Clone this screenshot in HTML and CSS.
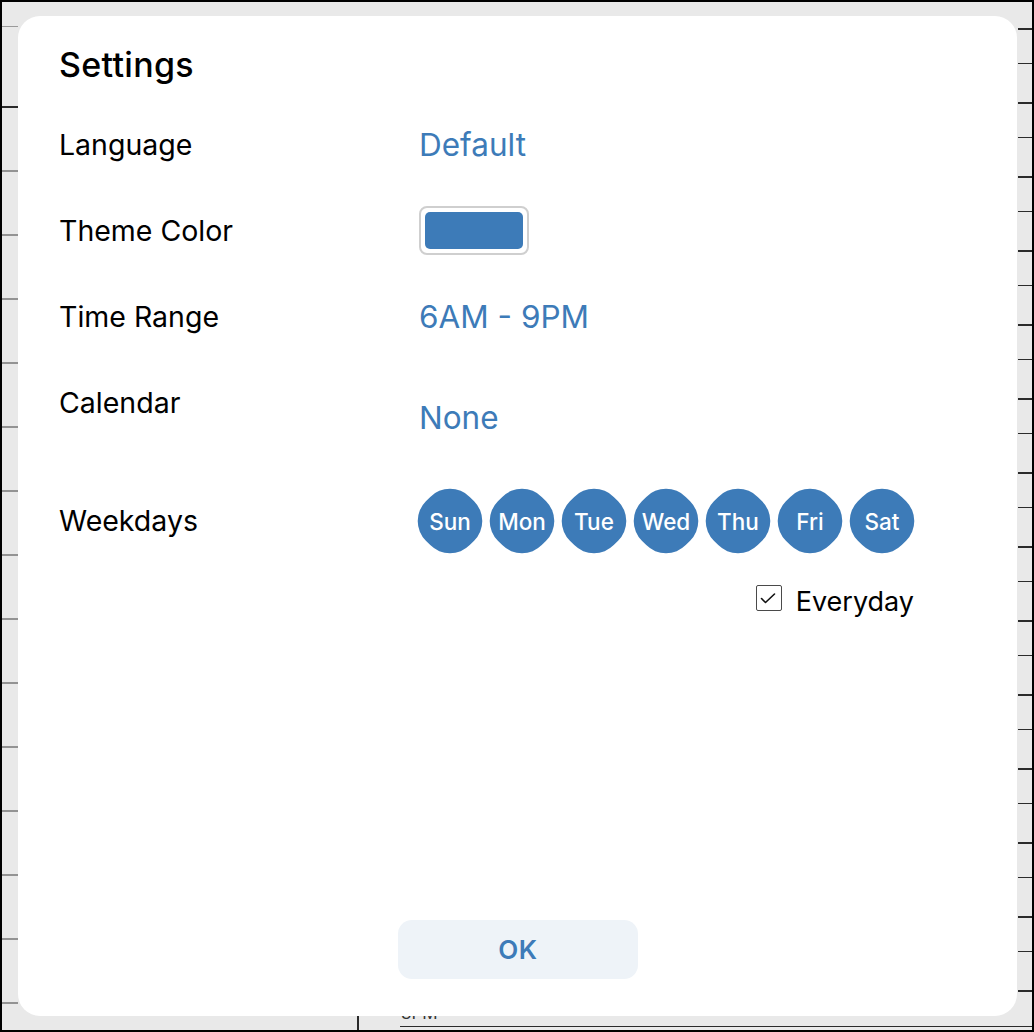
FILE: index.html
```html
<!DOCTYPE html>
<html lang="en">
<head>
<meta charset="utf-8">
<title>Settings</title>
<link rel="stylesheet" href="styles.css">
</head>
<body>
<div class="frame">
  <div class="backdrop">
    <div class="strip-left"></div>
    <div class="strip-top"></div>
    <div class="strip-right"></div>
    <div class="strip-bottom">
      <div class="divider"></div>
      <div class="hour-label">3PM</div>
    </div>
  </div>

  <div class="dialog" role="dialog" aria-label="Settings">
    <h1 class="title">Settings</h1>
    <div class="settings">
      <div class="row">
        <div class="label">Language</div>
        <div class="value">Default</div>
      </div>
      <div class="row">
        <div class="label">Theme Color</div>
        <div class="value"><span class="swatch"><span class="swatch-fill"></span></span></div>
      </div>
      <div class="row">
        <div class="label">Time Range</div>
        <div class="value">6AM - 9PM</div>
      </div>
      <div class="row row-calendar">
        <div class="label">Calendar</div>
        <div class="value value-calendar">None</div>
      </div>
      <div class="row">
        <div class="label">Weekdays</div>
        <div class="days">
          <span class="day"><span>Sun</span></span>
          <span class="day"><span>Mon</span></span>
          <span class="day"><span>Tue</span></span>
          <span class="day"><span>Wed</span></span>
          <span class="day"><span>Thu</span></span>
          <span class="day"><span>Fri</span></span>
          <span class="day"><span>Sat</span></span>
        </div>
      </div>
      <div class="everyday">
        <span class="checkbox">
          <svg width="26" height="26" viewBox="0 0 26 26"><path d="M6.5 13.5 L10.5 17.5 L19.5 9" fill="none" stroke="#111" stroke-width="1.6" stroke-linecap="round" stroke-linejoin="round"/></svg>
        </span>
        <span class="everyday-text">Everyday</span>
      </div>
    </div>
    <div class="spacer"></div>
    <button class="ok">OK</button>
  </div>
</div>
</body>
</html>
```

FILE: styles.css
```css
* { box-sizing: border-box; }

html, body {
  margin: 0;
  padding: 0;
  width: 1034px;
  height: 1032px;
  overflow: hidden;
  font-family: "Inter", "Noto Sans", "Liberation Sans", sans-serif;
}

.frame {
  position: relative;
  width: 1034px;
  height: 1032px;
  border: 2px solid #000;
  background: #e9e9e9;
}

.backdrop {
  display: grid;
  grid-template-columns: 16px 1fr 14px;
  grid-template-rows: 14px 1fr 14px;
  width: 100%;
  height: 100%;
}

.strip-left {
  grid-column: 1;
  grid-row: 1 / -1;
  background:
    linear-gradient(#9a9a9a, #9a9a9a) 0 24px / 100% 1px no-repeat,
    linear-gradient(#2a2a2a, #2a2a2a) 0 104px / 100% 2px no-repeat,
    repeating-linear-gradient(to bottom, #939393 0 2px, transparent 2px 64px) 0 168px / 100% 870px no-repeat;
}

.strip-top { grid-column: 2; grid-row: 1; }

.strip-right {
  grid-column: 3;
  grid-row: 1 / -1;
  background:
    repeating-linear-gradient(to bottom, #2b2b2b 0 2px, transparent 2px 35px, #2b2b2b 35px 36px, transparent 36px 74px) 0 26px / 100% 990px no-repeat,
    linear-gradient(#2b2b2b, #2b2b2b) 0 1024px / 100% 1px no-repeat;
}

.strip-bottom {
  grid-column: 2;
  grid-row: 3;
  display: flex;
  align-items: flex-end;
}

.divider {
  width: 2px;
  height: 14px;
  margin-left: 339px;
  background: #2a2a2a;
  align-self: stretch;
}

.hour-label {
  flex: 1;
  margin-left: 41px;
  margin-bottom: 3px;
  border-bottom: 1px solid #2a2a2a;
  font-size: 17px;
  line-height: 17px;
  height: 22px;
  padding-bottom: 5px;
  color: #333;
  padding-left: 1px;
}

.dialog {
  position: absolute;
  left: 16px;
  top: 14px;
  width: 999px;
  height: 1000px;
  background: #fff;
  border-radius: 22px;
  display: flex;
  flex-direction: column;
  padding: 28px 41px 37px;
  color: #000;
}

.title {
  margin: 0;
  font-size: 34px;
  line-height: 42px;
  font-weight: 500;
  letter-spacing: 0.3px;
}

.settings {
  margin-top: 16px;
  display: flex;
  flex-direction: column;
}

.row {
  display: grid;
  grid-template-columns: 360px 1fr;
  height: 86px;
  align-items: center;
}

.label {
  font-size: 28.5px;
  line-height: 86px;
  font-weight: 400;
}

.value {
  font-size: 31.5px;
  line-height: 86px;
  color: #3d7bb8;
}

.row-calendar {
  height: 118px;
  align-items: start;
}

.value-calendar {
  padding-top: 15px;
}

.swatch {
  display: inline-flex;
  vertical-align: middle;
  width: 110px;
  height: 49px;
  border: 2px solid #cfcfcf;
  border-radius: 8px;
  padding: 4px;
  margin-top: -6px;
}

.swatch-fill {
  flex: 1;
  background: #3d7bb8;
  border-radius: 5px;
}

.days {
  display: flex;
  gap: 8px;
  margin-left: -1px;
}

.day {
  position: relative;
  width: 64px;
  height: 64px;
  display: grid;
  place-items: center;
  color: #fff;
  font-size: 22.5px;
  font-weight: 500;
}

.day::before {
  content: "";
  position: absolute;
  inset: 1px;
  background: #3d7bb8;
  border-radius: 45%;
  transform: rotate(45deg);
}

.day span { position: relative; }

.everyday {
  display: flex;
  justify-content: flex-end;
  align-items: baseline;
  gap: 14px;
  margin-top: 21px;
  padding-right: 62px;
}

.checkbox {
  width: 26px;
  height: 26px;
  border: 1.5px solid #4a4a4a;
  border-radius: 2px;
  margin-bottom: 3px;
  position: relative;
  display: block;
}

.checkbox svg {
  position: absolute;
  left: -1.5px;
  top: -1.5px;
}

.everyday-text {
  font-size: 27px;
  line-height: 30px;
}

.spacer { flex: 1; }

.ok {
  align-self: center;
  width: 240px;
  height: 59px;
  border: none;
  border-radius: 14px;
  background: #eef3f8;
  color: #3d7bb8;
  font-family: inherit;
  font-size: 26px;
  font-weight: 600;
  letter-spacing: 0.5px;
  margin-left: 1px;
  padding: 0;
}
```
